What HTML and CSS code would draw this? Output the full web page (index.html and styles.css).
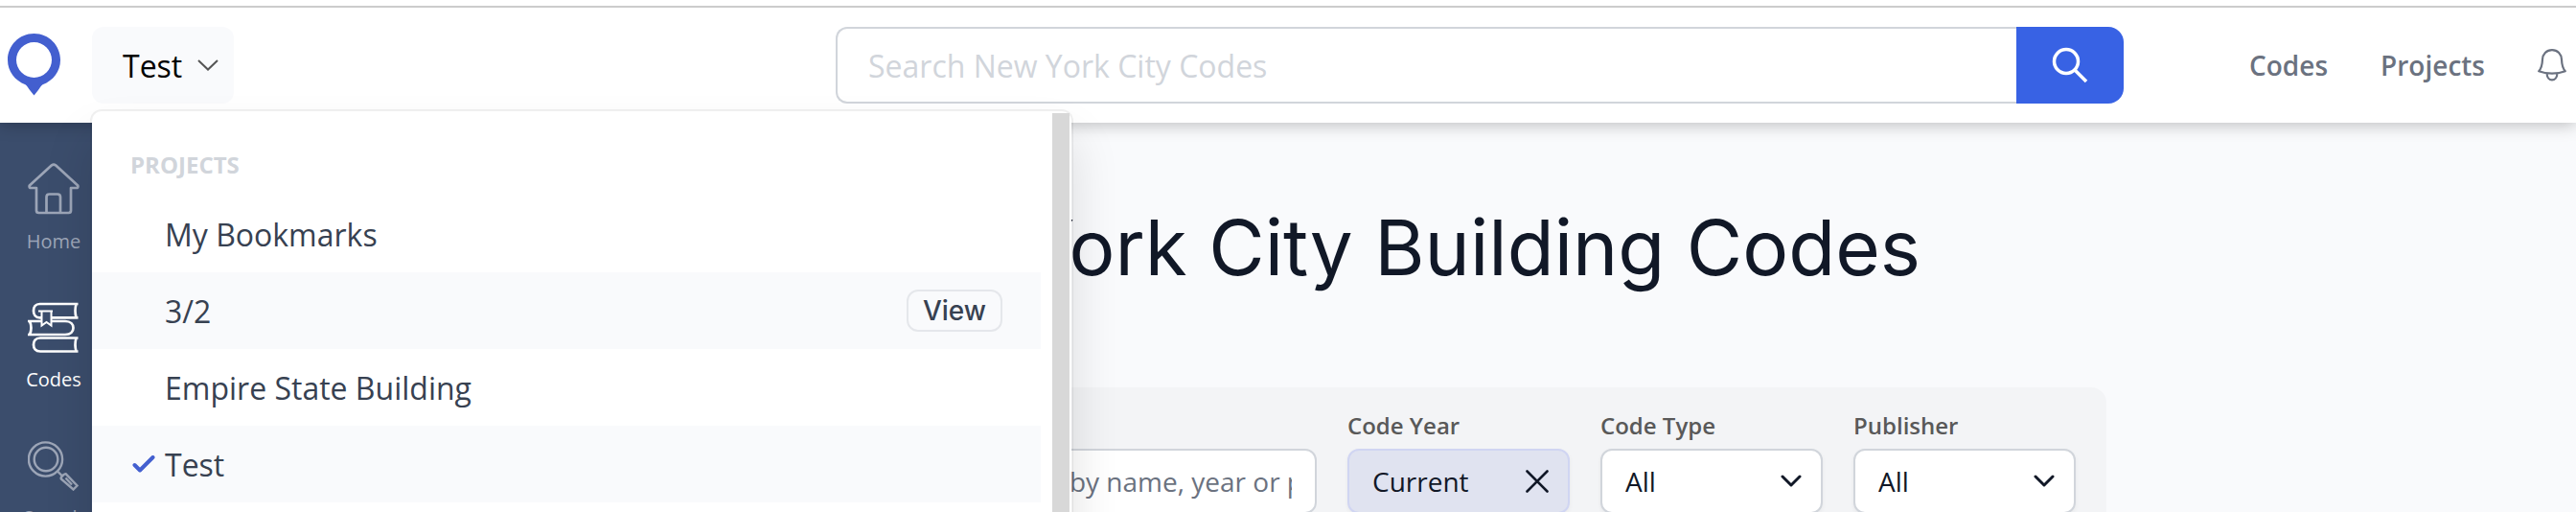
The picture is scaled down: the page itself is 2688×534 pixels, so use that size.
FILE: index.html
```html
<!DOCTYPE html>
<html lang="en">
<head>
<meta charset="utf-8">
<title>New York City Building Codes</title>
<link rel="stylesheet" href="styles.css">
</head>
<body>
<header class="topbar">
  <div class="brand">
    <a class="logo" href="#" aria-label="Home page">
      <svg width="56" height="66" viewBox="0 0 56 66"><path fill="#435fcf" fill-rule="evenodd" d="M27.500 0C43 0 55 12.500 55 27.500C55 39.500 47.500 49 36.500 53.200C34.500 54.600 33 57.500 31.500 59.600L27.500 64.500L23.500 59.600C22 57.500 20.500 54.600 18.500 53.200C7.500 49 0 39.500 0 27.500C0 12.500 12 0 27.500 0ZM27.500 9A18.500 18.500 0 1 0 27.500 46A18.500 18.500 0 1 0 27.500 9Z"/></svg>
    </a>
    <div class="picker">
      <button class="picker-button" type="button" aria-expanded="true">Test
        <svg width="22" height="12" viewBox="0 0 22 12"><path d="M1 1L11 10.500L21 1" fill="none" stroke="#555" stroke-width="2"/></svg>
      </button>
      <div class="menu">
        <div class="menu-list">
          <h2 class="menu-title">PROJECTS</h2>
          <ul class="menu-items">
            <li class="menu-item"><span class="tick"></span><a href="#">My Bookmarks</a></li>
            <li class="menu-item shaded"><span class="tick"></span><a href="#">3/2</a><button class="view" type="button">View</button></li>
            <li class="menu-item"><span class="tick"></span><a href="#">Empire State Building</a></li>
            <li class="menu-item shaded"><span class="tick"><svg width="24" height="18" viewBox="0 0 24 18"><path d="M2.500 10L8 15.500L21.500 2" fill="none" stroke="#435fcf" stroke-width="4" stroke-linecap="round" stroke-linejoin="round"/></svg></span><a href="#">Test</a></li>
          </ul>
        </div>
        <div class="menu-scroll"></div>
      </div>
    </div>
  </div>
  <form class="search">
    <input class="search-input" type="text" aria-label="Search New York City Codes" placeholder="Search New York City Codes">
    <button class="search-button" type="button" aria-label="Search">
      <svg width="38" height="38" viewBox="0 0 38 38" fill="none" stroke="#fff"><circle cx="15" cy="15" r="12.500" stroke-width="3.500"/><path d="M24 24L36 36" stroke-width="3.500"/></svg>
    </button>
  </form>
  <nav class="links">
    <a href="#">Codes</a>
    <a href="#">Projects</a>
    <button class="bell" type="button" aria-label="Notifications">
      <svg width="32" height="34" viewBox="0 0 32 34" fill="none" stroke="#6b7280" stroke-width="2.200" stroke-linejoin="round"><path d="M15 1.200C9 1.200 5.300 5.500 5 11C4.800 16 4.200 20 1.200 23.200C9 26.400 21 26.400 28.800 23.200C25.800 20 25.200 16 25 11C24.700 5.500 21 1.200 15 1.200ZM9.600 26C9.800 29.500 12 32.400 15 32.400S20.200 29.500 20.400 26"/></svg>
    </button>
  </nav>
</header>
<div class="body">
  <nav class="rail">
    <a class="rail-item" href="#">
      <svg width="54" height="54" viewBox="0 0 54 54" fill="none" stroke="currentColor" stroke-width="2.700" stroke-linejoin="round"><path d="M25 2.300Q27 .8 29 2.300L52.200 23.500Q53 26 50.500 26H45V49.500Q45 52 42.500 52H11.500Q9 52 9 49.500V26H3.500Q1 26 1.800 23.500Z"/><path d="M19.500 52V35.500Q19.500 32.500 22.500 32.500H31Q34 32.500 34 35.500V52"/></svg>
      <span>Home</span>
    </a>
    <a class="rail-item active" href="#">
      <svg width="54" height="54" viewBox="0 0 54 54" fill="none" stroke="currentColor" stroke-width="2.700"><path d="M52.500 3H12.500C8 3 6 6.500 6 10.200S8 17.300 12.500 17.300H14M25 17.300H52.500M50.500 3Q48.500 10 50.500 17.300"/><path d="M15 21H0M25 21H39C45 21 47.500 24.500 47.500 28S45 35 39 35H0M2 21Q5 28 2 35"/><path d="M52.500 38.500H13C8 38.500 6 42 6 45.500S8 52.500 13 52.500H52.500M50.500 38.500Q48.500 45.500 50.500 52.500"/><path stroke-width="2" d="M11 10.500H26M14.500 10.500V25.500L19.500 22L24.500 25.500V10.500"/></svg>
      <span>Codes</span>
    </a>
    <a class="rail-item" href="#">
      <svg width="54" height="54" viewBox="0 -2 54 54" fill="none" stroke="currentColor" stroke-width="2.400"><circle cx="18.500" cy="19" r="17.600"/><circle cx="19" cy="19" r="12.300"/><path d="M31 31.500L36 36.500M39.800 34.300L51.500 46.500L47.500 50.500L34.800 39.500Q34 38 37 35.500Q39 33.800 39.800 34.300ZM39.500 38.500L46 45.500"/></svg>
      <span>Search</span>
    </a>
  </nav>
  <main class="main">
    <h1 class="title">New York City Building Codes</h1>
    <form class="filters">
      <div class="field wide"><label for="name">Search</label><input id="name" type="text" placeholder="Search by name, year or publisher"></div>
      <div class="field"><label for="year">Code Year</label>
        <div class="control chosen"><select id="year"><option>Current</option></select>
          <button class="clear" type="button" aria-label="Clear code year"><svg width="24" height="24" viewBox="0 0 24 24"><path d="M1.500 1.500L22.500 22.500M22.500 1.500L1.500 22.500" stroke="#111827" stroke-width="2.600" stroke-linecap="round"/></svg></button></div></div>
      <div class="field"><label for="type">Code Type</label>
        <div class="control"><select id="type"><option>All</option></select>
          <svg width="22" height="14" viewBox="0 0 22 14"><path d="M2 2L11 11L20 2" fill="none" stroke="#111827" stroke-width="3" stroke-linecap="round" stroke-linejoin="round"/></svg></div></div>
      <div class="field"><label for="publisher">Publisher</label>
        <div class="control"><select id="publisher"><option>All</option></select>
          <svg width="22" height="14" viewBox="0 0 22 14"><path d="M2 2L11 11L20 2" fill="none" stroke="#111827" stroke-width="3" stroke-linecap="round" stroke-linejoin="round"/></svg></div></div>
    </form>
  </main>
</div>
</body>
</html>
```
FILE: styles.css
```css
* { box-sizing: border-box; }
html { overflow: hidden; }
body {
  margin: 0;
  height: 100vh;
  overflow: hidden;
  display: flex;
  flex-direction: column;
  background: #f9fafc;
  color: #374151;
  font-family: "Open Sans", "Noto Sans", sans-serif;
  font-size: 32px;
}
a { color: inherit; text-decoration: none; }
button, input, select { font: inherit; color: inherit; margin: 0; }
button { cursor: pointer; border: 0; padding: 0; background: none; }
svg { display: block; flex: none; }

.topbar {
  position: relative;
  z-index: 2;
  display: grid;
  grid-template-columns: 1fr 1344px 464px;
  align-items: center;
  flex: none;
  margin-top: 6px;
  border-top: 2px solid #ccc;
  padding: 20px 8px;
  background: #fff;
  box-shadow: 0 2px 16px rgba(0, 0, 0, .25);
}
.topbar::before {
  content: "";
  position: absolute;
  inset: -8px 0 auto;
  height: 6px;
  background: #fff;
}
.brand { display: flex; align-items: center; gap: 32px; }
.picker { position: relative; }
.picker-button {
  display: flex;
  align-items: center;
  gap: 16px;
  height: 80px;
  padding: 0 16px 0 32px;
  border-radius: 12px;
  background: #f9fafc;
  color: #000;
}
.menu {
  position: absolute;
  top: 86px;
  left: -2px;
  display: flex;
  width: 1026px;
  height: 640px;
  border: 2px solid rgba(0, 0, 0, .06);
  border-radius: 12px;
  background: #fff;
  background-clip: padding-box;
  box-shadow: 0 30px 50px rgba(0, 0, 0, .12);
}
.menu-list { flex: 1; padding-top: 32px; }
.menu-scroll {
  width: 18px;
  margin: 2px 2px 0 12px;
  background: #d8d8d8;
}
.menu-title {
  margin: 0;
  padding: 0 40px;
  font-size: 24px;
  line-height: 48px;
  color: #d1d5db;
}
.menu-items { list-style: none; margin: 0; padding: 8px 0; }
.menu-item {
  display: flex;
  align-items: center;
  height: 80px;
  padding: 0 40px;
}
.menu-item.shaded { background: #f9fafc; }
.menu-item a { flex: 1; }
.tick { width: 36px; padding-left: 2px; }
.view {
  width: 100px;
  height: 44px;
  border: 2px solid #e5e7eb;
  border-radius: 12px;
  font: 500 28px Inter, sans-serif;
}

.search { display: flex; height: 80px; }
.search-input {
  flex: 1;
  min-width: 0;
  padding: 0 32px;
  border: 2px solid #d1d5db;
  border-right: 0;
  border-radius: 12px 0 0 12px;
  background: #fff;
  outline: 0;
}
.search-input::placeholder { color: #d1d5db; opacity: 1; }
.search-button {
  display: grid;
  place-items: center;
  width: 112px;
  border-radius: 0 16px 16px 0;
  background: #3862e4;
}
.links {
  display: flex;
  align-items: center;
  justify-content: flex-end;
  gap: 55px;
  color: #6b7280;
  font-size: 28px;
  font-weight: 600;
}

.body { display: flex; flex: 1; min-height: 0; }
.rail {
  display: flex;
  flex-direction: column;
  gap: 46px;
  width: 112px;
  overflow: hidden;
  padding-top: 42px;
  background: #3b4d6c;
  color: #9ca5b7;
  font-size: 20px;
}
.rail-item {
  display: flex;
  flex-direction: column;
  align-items: center;
  gap: 12px;
  line-height: 32px;
}
.active { color: #fff; }
.main {
  flex: 1;
  min-width: 0;
  overflow: hidden;
  padding: 72px 490px 0 568px;
}
.title {
  margin: 0 0 88px;
  color: #111827;
  font: 400 80px/116px Inter, sans-serif;
  text-align: center;
}
.filters {
  display: flex;
  justify-content: flex-end;
  gap: 32px;
  height: 200px;
  padding: 24px 32px;
  border-radius: 16px;
  background: #f3f4f6;
}
.field { width: 232px; font-size: 28px; }
.field.wide { width: 380px; }
.field label {
  display: block;
  margin-bottom: 8px;
  color: #595959;
  font-size: 24px;
  font-weight: 600;
  line-height: 32px;
}
.field input, .control {
  width: 100%;
  height: 68px;
  border: 2px solid #d1d5db;
  border-radius: 12px;
  background: #fff;
  color: #111827;
}
.field input { padding: 0 24px; }
.field input::placeholder { color: #6b7280; opacity: 1; }
.control {
  display: flex;
  align-items: center;
  padding: 0 20px 0 24px;
  box-shadow: 0 2px 4px rgba(0, 0, 0, .05);
}
.control.chosen { background: #e0e3f0; border-color: #d0d5f2; }
.control select {
  flex: 1;
  min-width: 0;
  appearance: none;
  border: 0;
  padding: 0;
  background: none;
  outline: 0;
}
```
